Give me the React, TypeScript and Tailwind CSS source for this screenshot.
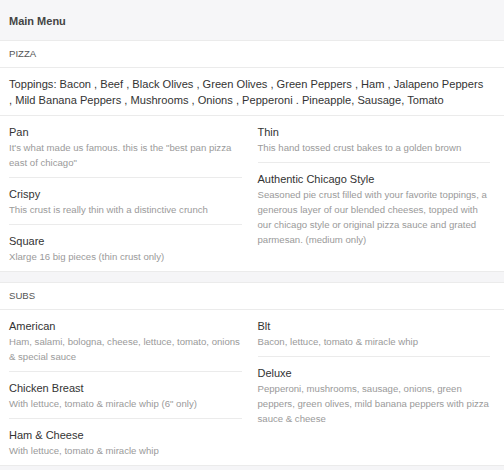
type Item = { name: string; desc: string };

const pizzaLeft: Item[] = [
  { name: "Pan", desc: 'It\'s what made us famous. this is the "best pan pizza east of chicago"' },
  { name: "Crispy", desc: "This crust is really thin with a distinctive crunch" },
  { name: "Square", desc: "Xlarge 16 big pieces (thin crust only)" },
];

const pizzaRight: Item[] = [
  { name: "Thin", desc: "This hand tossed crust bakes to a golden brown" },
  {
    name: "Authentic Chicago Style",
    desc: "Seasoned pie crust filled with your favorite toppings, a generous layer of our blended cheeses, topped with our chicago style or original pizza sauce and grated parmesan. (medium only)",
  },
];

const subsLeft: Item[] = [
  { name: "American", desc: "Ham, salami, bologna, cheese, lettuce, tomato, onions & special sauce" },
  { name: "Chicken Breast", desc: 'With lettuce, tomato & miracle whip (6" only)' },
  { name: "Ham & Cheese", desc: "With lettuce, tomato & miracle whip" },
];

const subsRight: Item[] = [
  { name: "Blt", desc: "Bacon, lettuce, tomato & miracle whip" },
  {
    name: "Deluxe",
    desc: "Pepperoni, mushrooms, sausage, onions, green peppers, green olives, mild banana peppers with pizza sauce & cheese",
  },
];

const MenuColumn = ({ items }: { items: Item[] }) => (
  <div className="flex flex-col">
    {items.map((item, i) => (
      <div
        key={item.name}
        className={`pt-2 pb-[7px] ${i < items.length - 1 ? "border-b border-[#ebebeb]" : ""}`}
      >
        <div className="text-[11px] leading-4 text-[#333]">{item.name}</div>
        <div className="text-[9.6px] leading-[15px] text-[#9a9a9a]">{item.desc}</div>
      </div>
    ))}
  </div>
);

const SectionLabel = ({ label }: { label: string }) => (
  <div className="h-[27px] flex items-center pl-[9px] border-b border-[#ebebeb] text-[9.6px] text-[#555] uppercase">
    {label}
  </div>
);

export default function App() {
  return (
    <div className="w-[504px] h-[470px] overflow-hidden bg-[#f5f5f7] font-['Liberation_Sans',Arial,sans-serif]">
      <div className="h-[41px] flex items-center pt-[3px] pl-[9px] border-b border-[#ebebeb] bg-[#f6f6f8]">
        <h1 className="text-[11px] font-bold text-[#444]">Main Menu</h1>
      </div>

      <div className="bg-white border-b border-[#ebebeb]">
        <SectionLabel label="Pizza" />
        <div className="pt-2 pb-[7px] pl-[9px] pr-[10px] border-b border-[#ebebeb] text-[11.1px] leading-4 text-[#333]">
          Toppings: Bacon , Beef , Black Olives , Green Olives , Green Peppers , Ham , Jalapeno Peppers
          <br />, Mild Banana Peppers , Mushrooms , Onions , Pepperoni . Pineapple, Sausage, Tomato
        </div>
        <div className="grid grid-cols-2 gap-x-4 pl-[9px] pr-[14px]">
          <MenuColumn items={pizzaLeft} />
          <MenuColumn items={pizzaRight} />
        </div>
      </div>

      <div className="h-[10px]" />

      <div className="bg-white border-t border-b border-[#ebebeb]">
        <SectionLabel label="Subs" />
        <div className="grid grid-cols-2 gap-x-4 pl-[9px] pr-[14px]">
          <MenuColumn items={subsLeft} />
          <MenuColumn items={subsRight} />
        </div>
      </div>
    </div>
  );
}
